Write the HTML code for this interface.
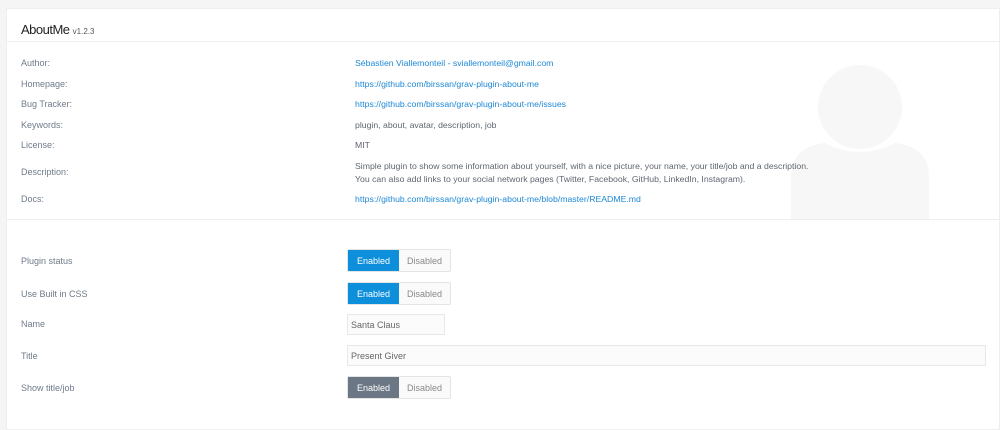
<!DOCTYPE html>
<html><head><style>
body{margin:0;background:#f5f5f5;font-family:"Liberation Sans",sans-serif;width:1000px;height:407px;overflow:hidden;position:relative}
.panel{position:absolute;left:6px;top:8px;width:992px;height:420px;background:#fff;border:1px solid #eee}
.t{position:absolute;font-size:9px;color:#6f7b8a;white-space:nowrap}
.v{position:absolute;left:348px;font-size:8.7px;color:#5f6670;white-space:nowrap}
a,.a{color:#1e88d6;text-decoration:none}
.tg{position:absolute;left:340px;width:102px;height:21px;border:1px solid #e4e4e4;border-radius:2px;display:flex;font-size:9px;background:#fafafa}
.tg span{flex:1;display:flex;align-items:center;justify-content:center;color:#888}
.tg .on{background:#0e8fdc;color:#fff}
.tg .g{background:#6b7785;color:#fff}
.in{position:absolute;left:340px;height:21px;border:1px solid #e8e8e8;background:#fbfbfb;font-size:9px;color:#666;line-height:21px;padding-left:3px;box-sizing:border-box}
</style></head><body>
<div class="panel">
<div style="position:absolute;left:14px;top:13px;font-size:13px;color:#222;letter-spacing:-0.5px">AboutMe <span style="font-size:8px;color:#555;letter-spacing:0">v1.2.3</span></div>
<div style="position:absolute;left:0;right:0;top:32px;border-top:1px solid #f0f0f0"></div>
<svg style="position:absolute;left:780px;top:56px" width="146" height="154"><circle cx="73" cy="42" r="42" fill="#f7f7f7"/><path d="M4 154 L4 112 Q4 82 38 78 Q73 96 108 78 Q142 82 142 112 L142 154 Z" fill="#f7f7f7"/></svg>
<div class="t" style="left:14px;top:49px">Author:</div><div class="v a" style="top:49px">Sébastien Viallemonteil - sviallemonteil@gmail.com</div>
<div class="t" style="left:14px;top:70px">Homepage:</div><div class="v a" style="top:70px">https://github.com/birssan/grav-plugin-about-me</div>
<div class="t" style="left:14px;top:90px">Bug Tracker:</div><div class="v a" style="top:90px">https://github.com/birssan/grav-plugin-about-me/issues</div>
<div class="t" style="left:14px;top:111px">Keywords:</div><div class="v" style="top:111px">plugin, about, avatar, description, job</div>
<div class="t" style="left:14px;top:131px">License:</div><div class="v" style="top:131px">MIT</div>
<div class="t" style="left:14px;top:158px">Description:</div><div class="v" style="top:151px;line-height:13px">Simple plugin to show some information about yourself, with a nice picture, your name, your title/job and a description.<br>You can also add links to your social network pages (Twitter, Facebook, GitHub, LinkedIn, Instagram).</div>
<div class="t" style="left:14px;top:185px">Docs:</div><div class="v a" style="top:185px">https://github.com/birssan/grav-plugin-about-me/blob/master/README.md</div>
<div style="position:absolute;left:0;right:0;top:210px;border-top:1px solid #eee"></div>
<div class="t" style="left:14px;top:247px">Plugin status</div><div class="tg" style="top:240px"><span class="on">Enabled</span><span>Disabled</span></div>
<div class="t" style="left:14px;top:280px">Use Built in CSS</div><div class="tg" style="top:273px"><span class="on">Enabled</span><span>Disabled</span></div>
<div class="t" style="left:14px;top:310px">Name</div><div class="in" style="top:305px;width:98px">Santa Claus</div>
<div class="t" style="left:14px;top:342px">Title</div><div class="in" style="top:336px;width:639px">Present Giver</div>
<div class="t" style="left:14px;top:374px">Show title/job</div><div class="tg" style="top:367px"><span class="g">Enabled</span><span>Disabled</span></div>
</div>
</body></html>
